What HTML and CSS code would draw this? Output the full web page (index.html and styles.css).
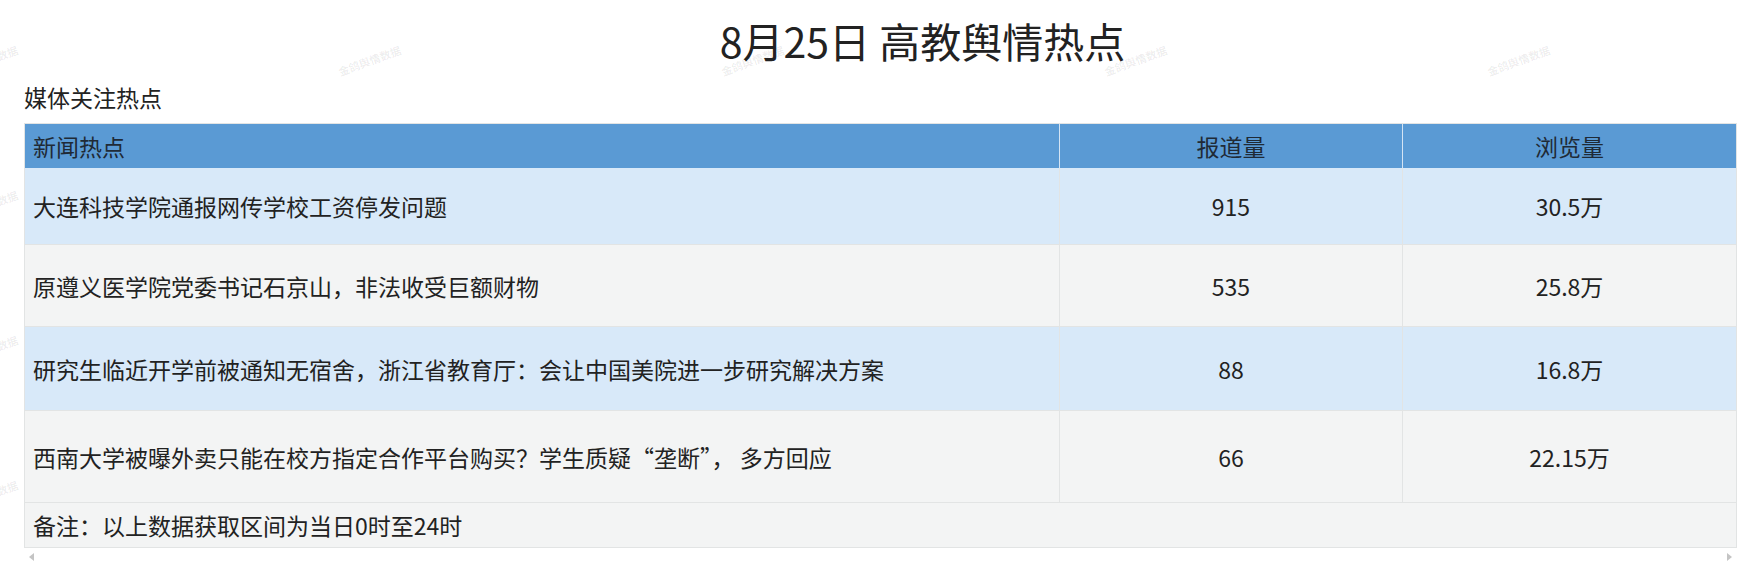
FILE: index.html
```html
<!DOCTYPE html>
<html lang="zh-CN">
<head>
<meta charset="utf-8">
<title>8月25日 高教舆情热点</title>
<link rel="stylesheet" href="styles.css">
</head>
<body>
<div class="watermarks" aria-hidden="true">
  <span>金鸽舆情数据</span><span>金鸽舆情数据</span><span>金鸽舆情数据</span><span>金鸽舆情数据</span><span>金鸽舆情数据</span>
  <span>金鸽舆情数据</span><span>金鸽舆情数据</span><span>金鸽舆情数据</span><span>金鸽舆情数据</span><span>金鸽舆情数据</span>
  <span>金鸽舆情数据</span><span>金鸽舆情数据</span><span>金鸽舆情数据</span><span>金鸽舆情数据</span><span>金鸽舆情数据</span>
  <span>金鸽舆情数据</span><span>金鸽舆情数据</span><span>金鸽舆情数据</span><span>金鸽舆情数据</span><span>金鸽舆情数据</span>
</div>
<main class="page">
  <h1 class="title">8月25日 高教舆情热点</h1>
  <div class="subtitle">媒体关注热点</div>
  <div class="table-wrap">
    <div class="table">
      <div class="row head">
        <div class="cell left">新闻热点</div>
        <div class="cell">报道量</div>
        <div class="cell">浏览量</div>
      </div>
      <div class="row blue r1">
        <div class="cell left">大连科技学院通报网传学校工资停发问题</div>
        <div class="cell">915</div>
        <div class="cell">30.5万</div>
      </div>
      <div class="row gray r2">
        <div class="cell left">原遵义医学院党委书记石京山，非法收受巨额财物</div>
        <div class="cell">535</div>
        <div class="cell">25.8万</div>
      </div>
      <div class="row blue r3">
        <div class="cell left">研究生临近开学前被通知无宿舍，浙江省教育厅：会让中国美院进一步研究解决方案</div>
        <div class="cell">88</div>
        <div class="cell">16.8万</div>
      </div>
      <div class="row gray r4">
        <div class="cell left">西南大学被曝外卖只能在校方指定合作平台购买？学生质疑“垄断”， 多方回应</div>
        <div class="cell">66</div>
        <div class="cell">22.15万</div>
      </div>
      <div class="row note">
        <div class="cell left">备注：以上数据获取区间为当日0时至24时</div>
      </div>
    </div>
    <div class="scrollbar">
      <span class="arrow arrow-left"></span>
      <span class="arrow arrow-right"></span>
    </div>
  </div>
</main>
</body>
</html>
```

FILE: styles.css
```css
* { box-sizing: border-box; }

html, body {
  margin: 0;
  padding: 0;
  background: #ffffff;
}

body {
  width: 1754px;
  height: 575px;
  overflow: hidden;
  position: relative;
  font-family: "Noto Sans CJK SC", "Noto Sans", sans-serif;
  color: #222222;
}

.watermarks {
  position: absolute;
  left: -60px;
  top: 0;
  display: grid;
  grid-template-columns: repeat(5, 383px);
  grid-auto-rows: 145px;
  z-index: 0;
  pointer-events: none;
}

.watermarks span {
  display: block;
  width: 120px;
  margin-top: 50px;
  margin-left: 60px;
  transform: translateX(-60px) rotate(-20deg);
  font-size: 11px;
  font-weight: 700;
  line-height: 16px;
  color: rgba(0, 0, 0, 0.07);
  text-align: center;
  white-space: nowrap;
}

.page {
  position: relative;
  z-index: 1;
  padding: 16px 0 0 24px;
}

.title {
  margin: 0;
  padding-left: 84px;
  width: 1713px;
  font-size: 41px;
  font-weight: 400;
  line-height: 48px;
  text-align: center;
  color: #222222;
}

.subtitle {
  margin-top: 18px;
  font-size: 23px;
  line-height: 30px;
  color: #222222;
}

.table-wrap {
  margin-top: 11px;
  width: 1713px;
}

.table {
  border: 1px solid #e2e4e4;
  background: #f3f4f4;
}

.row {
  display: grid;
  grid-template-columns: 1034px 343px 334px;
  border-bottom: 1px solid #e2e4e4;
}

.row:last-child { border-bottom: none; }

.cell {
  display: flex;
  align-items: center;
  justify-content: center;
  font-size: 23px;
  line-height: 30px;
  color: #222222;
  white-space: pre;
  border-left: 1px solid #e2e4e4;
}

.cell.left {
  justify-content: flex-start;
  padding-left: 8px;
  border-left: none;
}

.head {
  height: 44px;
  background: #5a9ad4;
  border-bottom: none;
}

.head .cell {
  border-left-color: #d4e4f4;
  color: #1f2a36;
}

.blue { background: #d8e9f9; }
.gray { background: #f3f4f4; }

.r1 { height: 77px; }
.r2 { height: 82px; }
.r3 { height: 84px; }
.r4 { height: 92px; }

.note {
  height: 44px;
  grid-template-columns: 1fr;
  background: #f3f4f4;
}

.scrollbar {
  height: 17px;
  display: flex;
  align-items: center;
  justify-content: space-between;
  padding: 0 5px;
}

.arrow {
  width: 0;
  height: 0;
  border-top: 4px solid transparent;
  border-bottom: 4px solid transparent;
}

.arrow-left { border-right: 5px solid #c4c4c4; }
.arrow-right { border-left: 5px solid #c4c4c4; }
```
